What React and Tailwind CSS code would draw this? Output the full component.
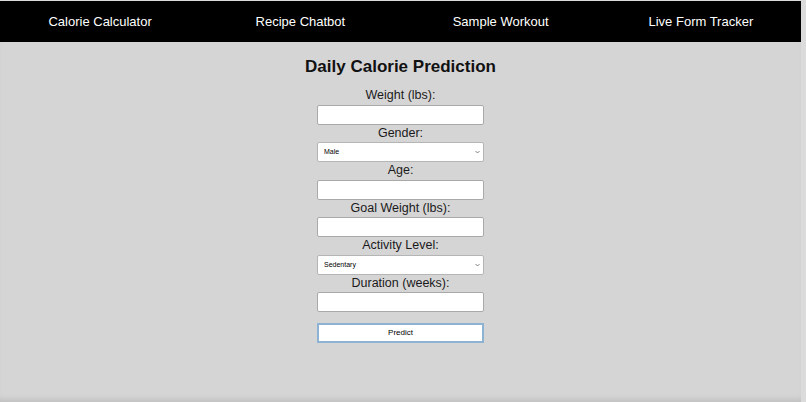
import { useState } from 'react';

const navLinks = ['Calorie Calculator', 'Recipe Chatbot', 'Sample Workout', 'Live Form Tracker'];

function Field({ label, children }) {
  return (
    <div className="flex flex-col items-center">
      <label className="block text-[12.5px] leading-[17.5px] text-[#1a1a1a]">{label}</label>
      {children}
    </div>
  );
}

function TextInput() {
  return (
    <input
      type="text"
      className="block w-[167px] h-[20px] bg-white border border-[#a9a9a9] rounded-[2px] outline-none px-1 text-[8px]"
    />
  );
}

function Select({ options }) {
  const [value, setValue] = useState(options[0]);
  return (
    <div className="relative w-[167px] h-[20px]">
      <select
        value={value}
        onChange={(e) => setValue(e.target.value)}
        className="block appearance-none w-full h-full bg-white border border-[#b5b5b5] rounded-[2px] pl-[6px] text-[7px] leading-[18px] text-black outline-none"
      >
        {options.map((o) => (
          <option key={o}>{o}</option>
        ))}
      </select>
      <svg className="absolute right-[4px] top-[8px] pointer-events-none" width="5" height="4" viewBox="0 0 5 4">
        <path d="M0.5 1 L2.5 3 L4.5 1" fill="none" stroke="#666" strokeWidth="0.8" />
      </svg>
    </div>
  );
}

export default function App() {
  return (
    <div
      className="w-[806px] h-[402px] bg-[#dcdbdc] overflow-hidden pt-px pr-[5px]"
      style={{ fontFamily: '"Liberation Sans", Arial, sans-serif' }}
    >
      <div className="relative h-full bg-[#d6d5d6] shadow-[inset_0_-6px_6px_-4px_rgba(0,0,0,0.12)]">
        {/* top navigation */}
        <nav className="grid grid-cols-4 h-[41px] bg-black items-center">
          {navLinks.map((link) => (
            <a key={link} className="text-white text-[13px] text-center cursor-pointer">
              {link}
            </a>
          ))}
        </nav>

        <div className="flex flex-col items-center pt-[14px]">
          <h1 className="text-[17px] font-bold text-[#111] leading-[22px] mb-[9px]">Daily Calorie Prediction</h1>
          <Field label="Weight (lbs):">
            <TextInput />
          </Field>
          <Field label="Gender:">
            <Select options={['Male', 'Female']} />
          </Field>
          <Field label="Age:">
            <TextInput />
          </Field>
          <Field label="Goal Weight (lbs):">
            <TextInput />
          </Field>
          <Field label="Activity Level:">
            <Select options={['Sedentary', 'Lightly Active', 'Moderately Active', 'Very Active']} />
          </Field>
          <Field label="Duration (weeks):">
            <TextInput />
          </Field>
          <button className="mt-[11px] w-[167px] h-[20px] bg-white border-2 border-[#8eb2d2] text-[8px] text-black">
            Predict
          </button>
        </div>
      </div>
    </div>
  );
}
